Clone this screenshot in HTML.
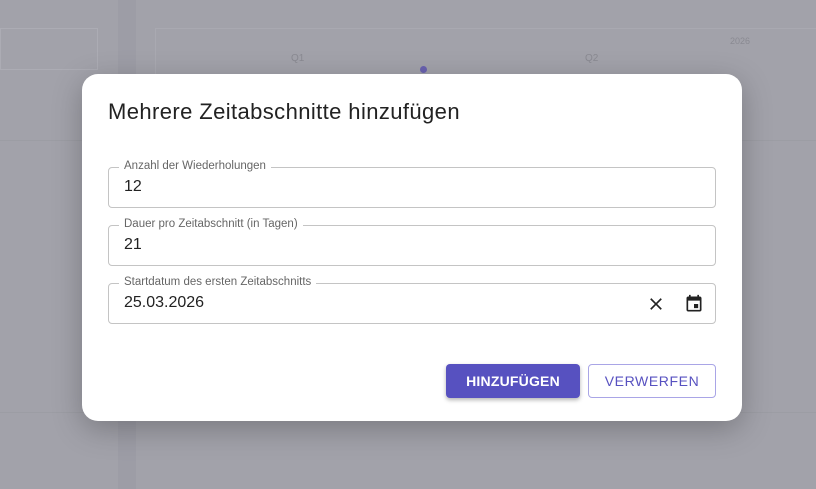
<!DOCTYPE html>
<html><head><style>
body{margin:0;width:816px;height:489px;overflow:hidden;background:#a2a2aa;font-family:"Liberation Sans",sans-serif;position:relative}
.bg{position:absolute}
.dlg{position:absolute;left:82px;top:74px;width:660px;height:347px;background:#fff;border-radius:16px;box-shadow:0 8px 30px rgba(0,0,0,.25)}
h1{position:absolute;left:26px;top:25px;margin:0;font-size:22px;font-weight:normal;color:#222;letter-spacing:.4px}
.f{position:absolute;left:26px;width:606px;height:39px;border:1px solid #c4c4c4;border-radius:4px}
.f label{position:absolute;left:10px;top:-8px;background:#fff;padding:0 5px;font-size:11.5px;color:#666}
.f span{position:absolute;left:15px;top:10px;font-size:16px;color:#222}
.btn{position:absolute;top:290px;height:34px;border-radius:4px;font-size:14px;letter-spacing:.6px;display:flex;align-items:center;justify-content:center}
</style></head><body>
<div class="bg" style="left:0;top:28px;width:96px;height:40px;border:1px solid #acacb4"></div>
<div class="bg" style="left:118px;top:0;width:18px;height:489px;background:#9d9da6"></div>
<div class="bg" style="left:155px;top:28px;width:661px;height:80px;border-top:1px solid #a9a9b1;border-left:1px solid #a9a9b1"></div>
<div class="bg" style="left:0;top:140px;width:816px;height:1px;background:#9c9da4"></div>
<div class="bg" style="left:0;top:412px;width:816px;height:1px;background:#9c9da4"></div>
<div class="bg" style="left:420px;top:66px;width:7px;height:7px;border-radius:50%;background:#6a62b0"></div>
<div class="bg" style="left:291px;top:53px;font-size:10px;color:#8a8a92">Q1</div>
<div class="bg" style="left:585px;top:53px;font-size:10px;color:#8a8a92">Q2</div>
<div class="bg" style="left:730px;top:36px;font-size:9px;color:#8a8a92">2026</div>
<div class="dlg">
<h1>Mehrere Zeitabschnitte hinzufügen</h1>
<div class="f" style="top:93px"><label>Anzahl der Wiederholungen</label><span>12</span></div>
<div class="f" style="top:151px"><label>Dauer pro Zeitabschnitt (in Tagen)</label><span>21</span></div>
<div class="f" style="top:209px"><label>Startdatum des ersten Zeitabschnitts</label><span>25.03.2026</span>
<svg style="position:absolute;left:537px;top:10px" width="20" height="20" viewBox="0 0 24 24"><path d="M19 6.41L17.59 5 12 10.59 6.41 5 5 6.41 10.59 12 5 17.59 6.41 19 12 13.41 17.59 19 19 17.59 13.41 12z" fill="#222"/></svg>
<svg style="position:absolute;left:575px;top:10px" width="20" height="20" viewBox="0 0 24 24"><path d="M17 12h-5v5h5v-5zM16 1v2H8V1H6v2H5c-1.11 0-1.990.9-1.99 2L3 19c0 1.1.89 2 2 2h14c1.1 0 2-.9 2-2V5c0-1.1-.9-2-2-2h-1V1h-2zm3 18H5V8h14v11z" fill="#222"/></svg></div>
<div class="btn" style="left:364px;width:134px;background:#5751c0;color:#fff;font-weight:bold;letter-spacing:.2px;box-shadow:0 2px 4px rgba(0,0,0,.3)">HINZUFÜGEN</div>
<div class="btn" style="left:506px;width:126px;height:32px;border:1px solid #a9a5e6;color:#5751c0">VERWERFEN</div>
</div>
</body></html>
